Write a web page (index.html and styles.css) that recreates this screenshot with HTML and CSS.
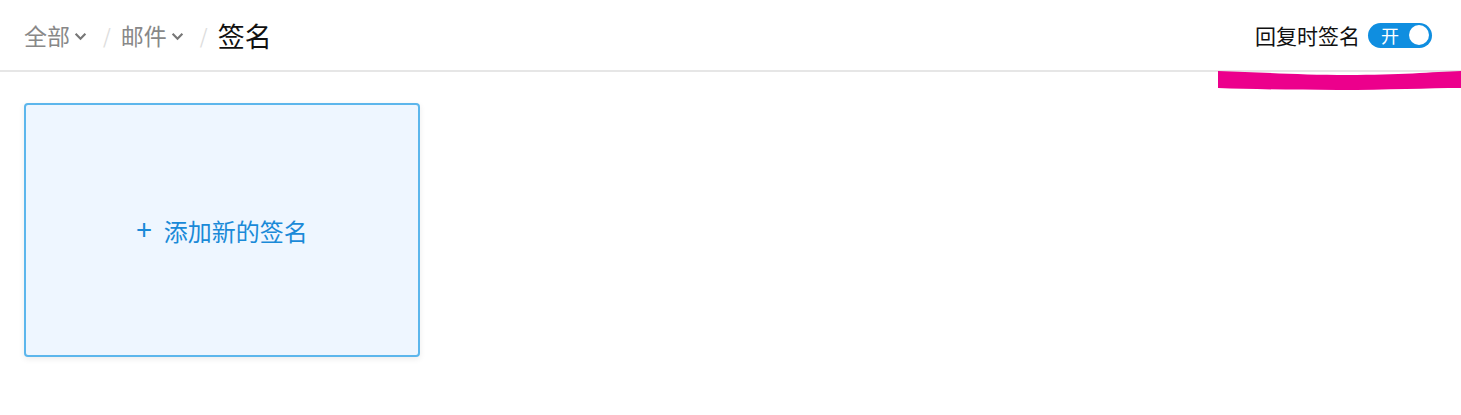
FILE: index.html
```html
<!DOCTYPE html>
<html lang="zh-CN">
<head>
  <meta charset="UTF-8">
  <meta name="viewport" content="width=device-width, initial-scale=1.0">
  <title>签名</title>
  <link rel="stylesheet" href="styles.css">
</head>
<body>
  <header class="topbar">
    <nav class="crumbs">
      <span class="crumb">全部<svg class="caret" viewBox="0 0 12 8"><path d="M1.5 1.5 6 6l4.5-4.5" /></svg></span>
      <span class="sep">/</span>
      <span class="crumb">邮件<svg class="caret" viewBox="0 0 12 8"><path d="M1.5 1.5 6 6l4.5-4.5" /></svg></span>
      <span class="sep">/</span>
      <span class="current">签名</span>
    </nav>
    <div class="reply-sign">
      <span>回复时签名</span>
      <button class="switch"><span class="switch-text">开</span><span class="knob"></span></button>
    </div>
    <svg class="mark" viewBox="0 0 243 22" preserveAspectRatio="none">
      <path d="M0 1 C40 2 80 5 130 5 C180 5 215 2 243 1 L243 18 C210 18 170 20 120 20 C70 20 30 19 0 18 Z" />
    </svg>
  </header>

  <main class="content">
    <div class="add-card">
      <span class="plus">+</span>
      <span>添加新的签名</span>
    </div>
  </main>
</body>
</html>
```

FILE: styles.css
```css
body {
  margin: 0;
  font-family: "Noto Sans CJK SC", "Liberation Sans", sans-serif;
  background: #fff;
  color: #111;
}
.topbar {
  position: relative;
  height: 70px;
  padding: 0 29px 0 24px;
  display: flex;
  align-items: center;
  justify-content: space-between;
  border-bottom: 2px solid #e6e6e6;
}
.crumbs {
  display: flex;
  align-items: center;
  font-size: 23px;
  color: #888;
}
.crumb {
  display: flex;
  align-items: center;
}
.caret {
  width: 13px;
  height: 9px;
  margin-left: 4px;
  margin-top: 3px;
  fill: none;
  stroke: #777;
  stroke-width: 2;
}
.sep {
  color: #ddd;
  margin: 0 10px 0 16px;
  font-size: 20px;
}
.current {
  color: #111;
  font-size: 27px;
}
.reply-sign {
  display: flex;
  align-items: center;
  gap: 8px;
  font-size: 21px;
  color: #111;
}
.switch {
  display: flex;
  align-items: center;
  justify-content: space-between;
  width: 64px;
  height: 25px;
  padding: 0 3px 0 13px;
  border: none;
  border-radius: 13px;
  background: #0f8ee0;
  color: #fff;
  font-family: inherit;
  font-size: 18px;
  cursor: pointer;
}
.knob {
  width: 20px;
  height: 20px;
  border-radius: 50%;
  background: #fff;
}
.mark {
  position: absolute;
  left: 1218px;
  top: 70px;
  width: 243px;
  height: 22px;
  fill: #ec008c;
}
.content {
  padding: 31px 24px;
}
.add-card {
  width: 392px;
  height: 250px;
  display: flex;
  align-items: center;
  justify-content: center;
  gap: 12px;
  border: 2px solid #5cb6ec;
  border-radius: 4px;
  background: #eef6ff;
  box-shadow: 0 2px 6px rgba(0, 0, 0, 0.08);
  color: #1a8ad8;
  font-size: 24px;
  cursor: pointer;
}
.plus {
  font-size: 28px;
  line-height: 1;
  margin-top: -4px;
}
```
